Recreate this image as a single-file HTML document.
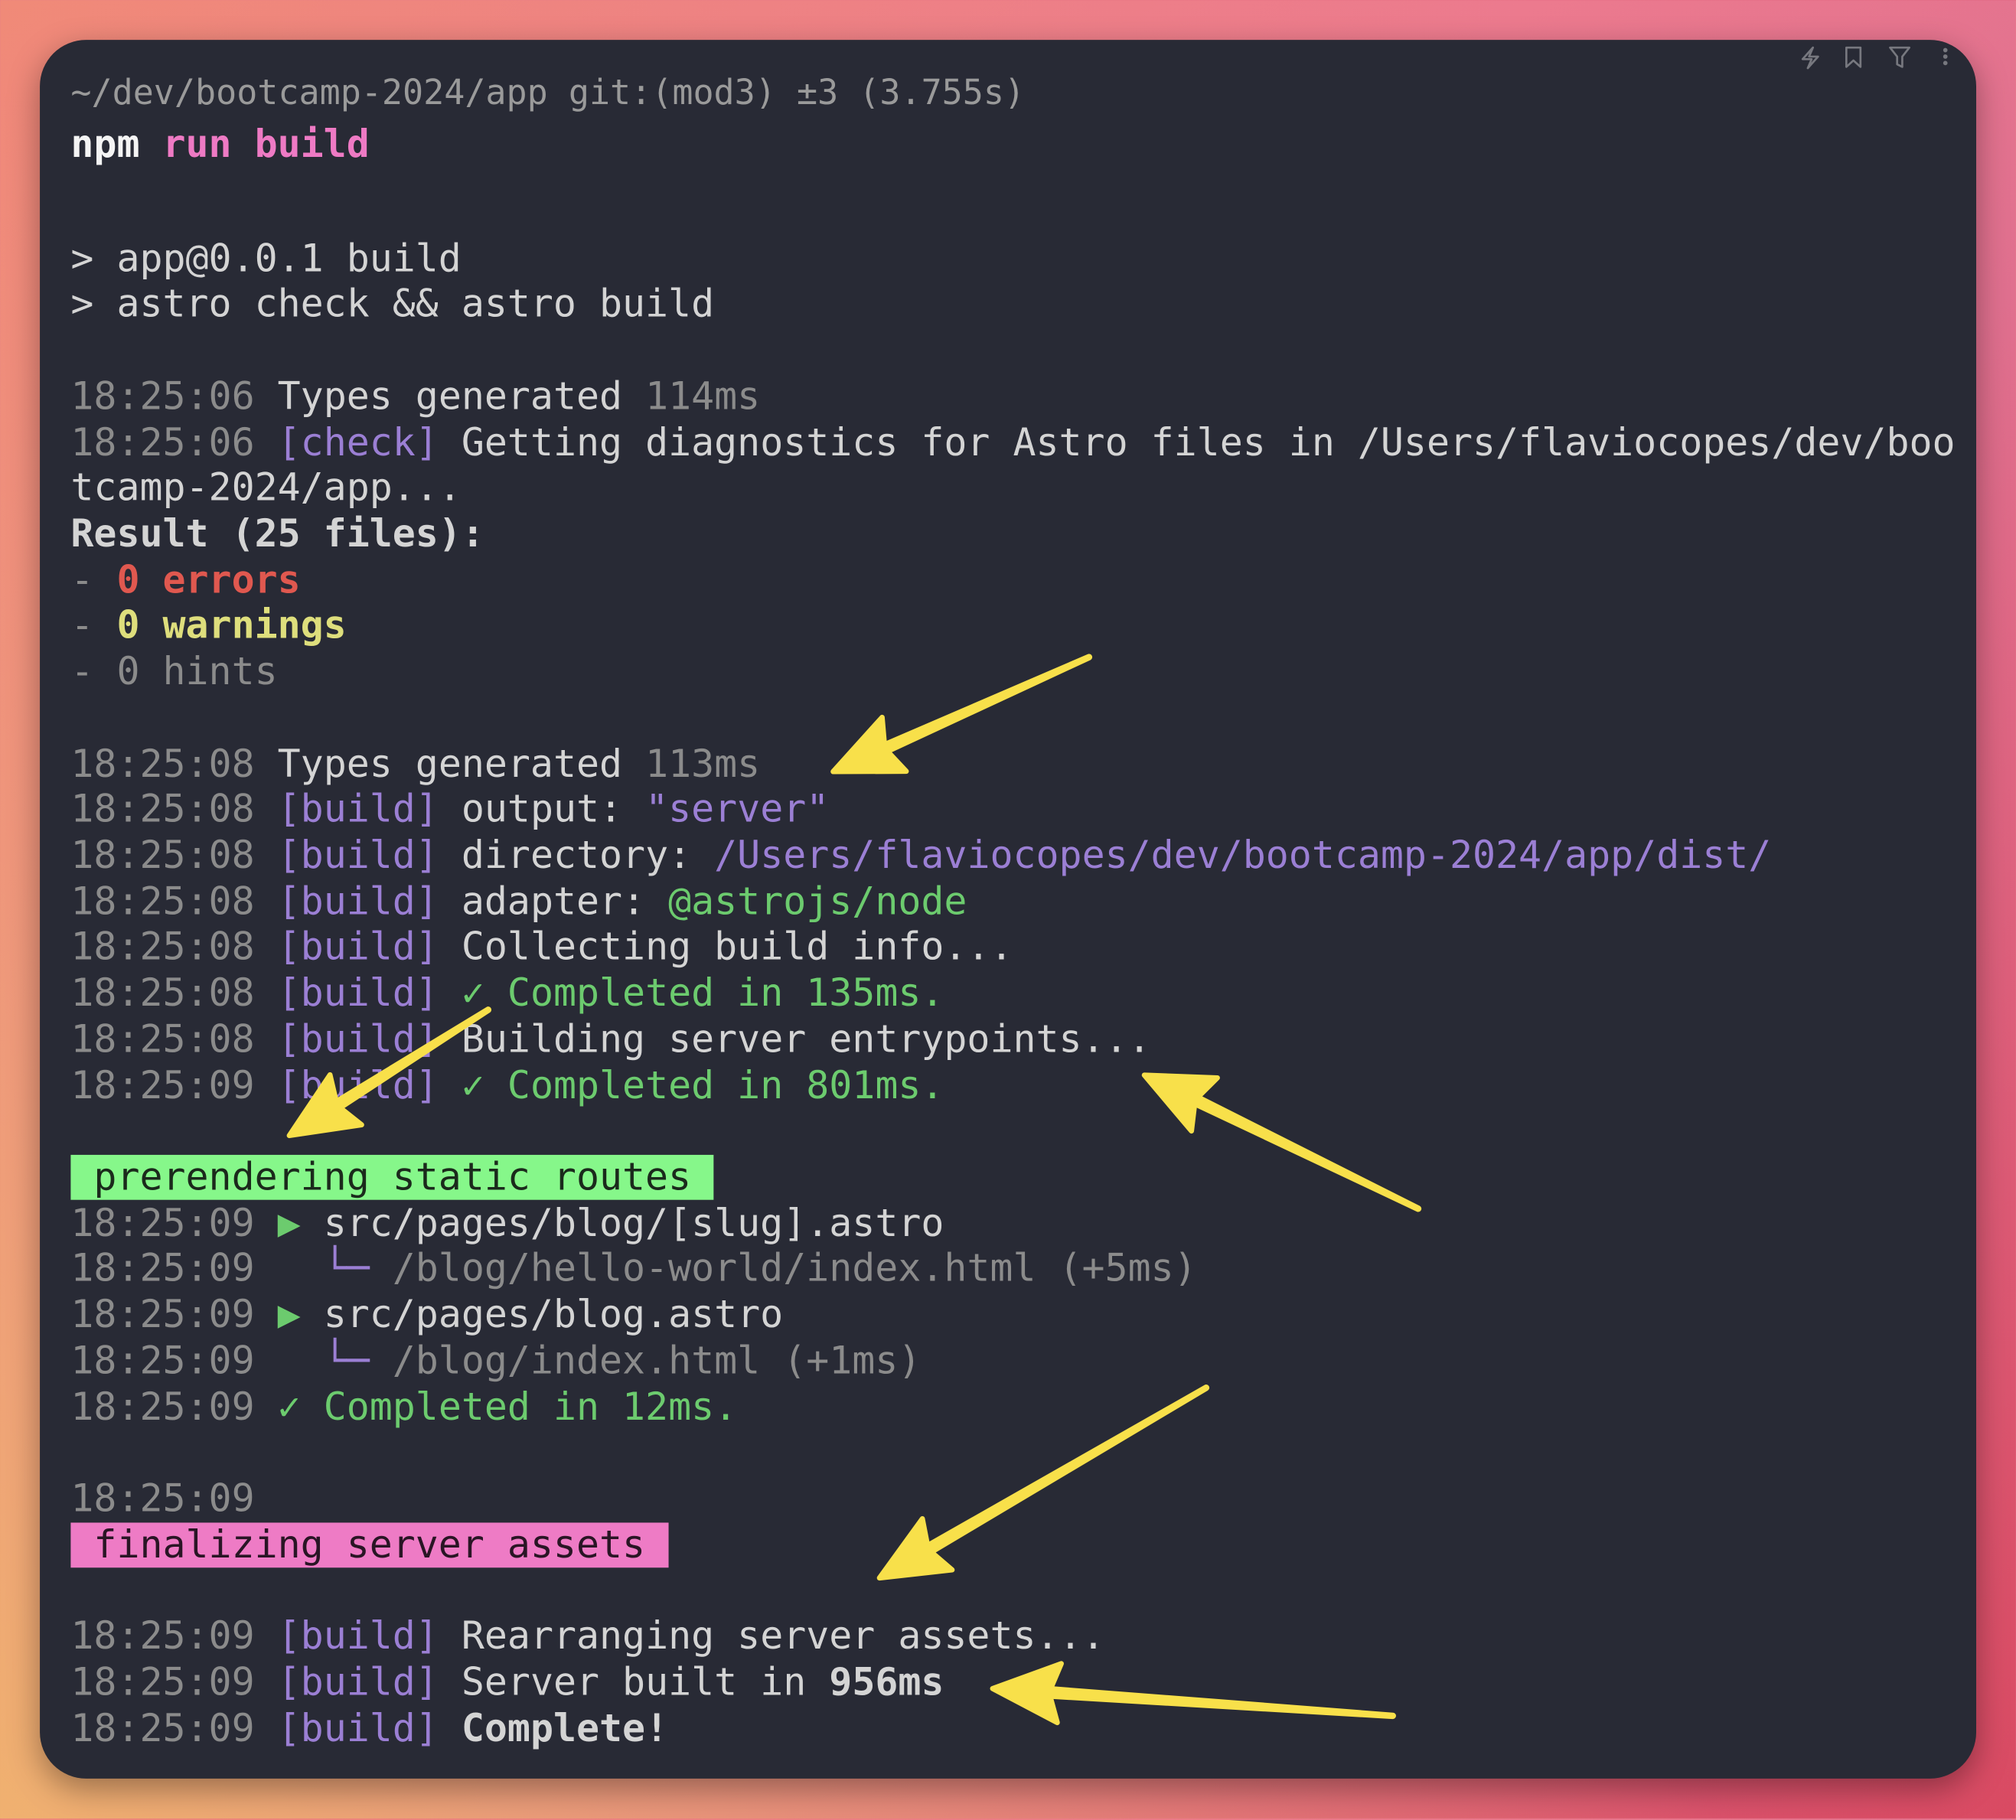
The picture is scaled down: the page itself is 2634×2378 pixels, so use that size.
<!DOCTYPE html>
<html><head><meta charset="utf-8"><style>
html,body{margin:0;padding:0;width:2634px;height:2376px;overflow:hidden}
body{background:linear-gradient(135deg,#f08a78 0%,#ec7a8e 40%,#e0708f 60%,#d94a62 100%)}
#bg2{position:absolute;left:0;top:0;width:2634px;height:2376px;background:linear-gradient(45deg,rgba(240,180,110,.95) 0%,rgba(240,160,110,0) 45%)}
#stage{position:absolute;left:0;top:0;width:1568px;height:1414px;transform:scale(1.6799,1.6803);transform-origin:0 0}
#win{position:absolute;left:31px;top:31px;width:1506px;height:1352px;background:#282a35;border-radius:36px;box-shadow:0 8px 24px rgba(0,0,0,.35)}
#txt{position:absolute;left:0;top:1.5px;width:1568px;height:1414px}
.l{position:absolute;left:55px;white-space:pre;font-family:"DejaVu Sans Mono","Liberation Mono",monospace;font-size:29.7px;line-height:35.72px;height:35.72px;color:#d4d4d4}
.t{color:#8b8b8b}.p{color:#9b7fd4}.g{color:#6ccb6e}.r{color:#e0584f}.y{color:#dede7c}.k{color:#ee7ac4}.w{color:#f4f4f4}.b{font-weight:bold}
.gb{background:#86f78a;color:#1b2a1c}.pb{background:#ee7bc5;color:#2a1525}
</style></head><body><div id="bg2"></div>
<div id="stage"><div id="win"></div>
<div id="txt">
<div class="l" style="top:53px;font-size:26.8px;color:#9a9a9a">~/dev/bootcamp-2024/app git:(mod3) ±3 (3.755s)</div>
<div class="l b" style="top:93px"><span class="w">npm</span> <span class="k">run build</span></div>
<div class="l" style="top:182.14px">&gt; app@0.0.1 build</div>
<div class="l" style="top:217.86px">&gt; astro check &amp;&amp; astro build</div>
<div class="l" style="top:289.30px"><span class="t">18:25:06</span> Types generated <span class="t">114ms</span></div>
<div class="l" style="top:325.02px"><span class="t">18:25:06</span> <span class="p">[check]</span> Getting diagnostics for Astro files in /Users/flaviocopes/dev/boo</div>
<div class="l" style="top:360.74px">tcamp-2024/app...</div>
<div class="l b" style="top:396.46px">Result (25 files):</div>
<div class="l" style="top:432.18px"><span class="t">-</span> <span class="r b">0 errors</span></div>
<div class="l" style="top:467.90px"><span class="t">-</span> <span class="y b">0 warnings</span></div>
<div class="l t" style="top:503.62px">- 0 hints</div>
<div class="l" style="top:575.06px"><span class="t">18:25:08</span> Types generated <span class="t">113ms</span></div>
<div class="l" style="top:610.78px"><span class="t">18:25:08</span> <span class="p">[build]</span> output: <span class="p">"server"</span></div>
<div class="l" style="top:646.50px"><span class="t">18:25:08</span> <span class="p">[build]</span> directory: <span class="p">/Users/flaviocopes/dev/bootcamp-2024/app/dist/</span></div>
<div class="l" style="top:682.22px"><span class="t">18:25:08</span> <span class="p">[build]</span> adapter: <span class="g">@astrojs/node</span></div>
<div class="l" style="top:717.94px"><span class="t">18:25:08</span> <span class="p">[build]</span> Collecting build info...</div>
<div class="l" style="top:753.66px"><span class="t">18:25:08</span> <span class="p">[build]</span> <span class="g">✓ Completed in 135ms.</span></div>
<div class="l" style="top:789.38px"><span class="t">18:25:08</span> <span class="p">[build]</span> Building server entrypoints...</div>
<div class="l" style="top:825.10px"><span class="t">18:25:09</span> <span class="p">[build]</span> <span class="g">✓ Completed in 801ms.</span></div>
<div class="l" style="top:896.54px"><span class="gb"> prerendering static routes </span></div>
<div class="l" style="top:932.26px"><span class="t">18:25:09</span> <span class="g">▶</span> src/pages/blog/[slug].astro</div>
<div class="l t" style="top:967.98px">18:25:09   <span class="p">└─</span> /blog/hello-world/index.html (+5ms)</div>
<div class="l" style="top:1003.70px"><span class="t">18:25:09</span> <span class="g">▶</span> src/pages/blog.astro</div>
<div class="l t" style="top:1039.42px">18:25:09   <span class="p">└─</span> /blog/index.html (+1ms)</div>
<div class="l" style="top:1075.14px"><span class="t">18:25:09</span> <span class="g">✓ Completed in 12ms.</span></div>
<div class="l t" style="top:1146.58px">18:25:09</div>
<div class="l" style="top:1182.30px"><span class="pb"> finalizing server assets </span></div>
<div class="l" style="top:1253.74px"><span class="t">18:25:09</span> <span class="p">[build]</span> Rearranging server assets...</div>
<div class="l" style="top:1289.46px"><span class="t">18:25:09</span> <span class="p">[build]</span> Server built in <b>956ms</b></div>
<div class="l" style="top:1325.18px"><span class="t">18:25:09</span> <span class="p">[build]</span> <b>Complete!</b></div>
</div>
<svg style="position:absolute;left:0;top:0" width="1568" height="1414" viewBox="0 0 1568 1414">
<g fill="none" stroke="#77787f" stroke-width="1.6" stroke-linejoin="round" stroke-linecap="round">
<path d="M1410 37 L1402 46 L1409 46 L1406 53 L1414 44 L1407 44 Z"/>
<path d="M1436 37 H1447 V52 L1441.5 47 L1436 52 Z"/>
<path d="M1470 37 H1485 L1479.5 44 V52 L1475.5 50 V44 Z"/>
</g>
<g fill="#77787f"><circle cx="1513" cy="39" r="1.7"/><circle cx="1513" cy="44" r="1.7"/><circle cx="1513" cy="49" r="1.7"/></g>
<defs><g id="ah"><path d="M0 0 L52 -23 L44 0 L52 23 Z" stroke="#f8e04a" stroke-width="4" stroke-linejoin="round"/></g></defs>
<g fill="#f8e04a">
<g transform="translate(648,600) rotate(-24.1)"><use href="#ah"/><path d="M40 -5 L218 -2.5 A2.5 2.5 0 0 1 218 2.5 L40 5 Z"/></g>
<g transform="translate(225,883) rotate(-32.3)"><use href="#ah"/><path d="M40 -5 L183 -2.5 A2.5 2.5 0 0 1 183 2.5 L40 5 Z"/></g>
<g transform="translate(890,836) rotate(26)"><use href="#ah"/><path d="M40 -5 L237 -2.5 A2.5 2.5 0 0 1 237 2.5 L40 5 Z"/></g>
<g transform="translate(684,1227) rotate(-30.2)"><use href="#ah"/><path d="M40 -5 L294 -2.5 A2.5 2.5 0 0 1 294 2.5 L40 5 Z"/></g>
<g transform="translate(772,1313) rotate(3.9)"><use href="#ah"/><path d="M40 -5 L312 -2.5 A2.5 2.5 0 0 1 312 2.5 L40 5 Z"/></g>
</g>
</svg>
</div></body></html>
